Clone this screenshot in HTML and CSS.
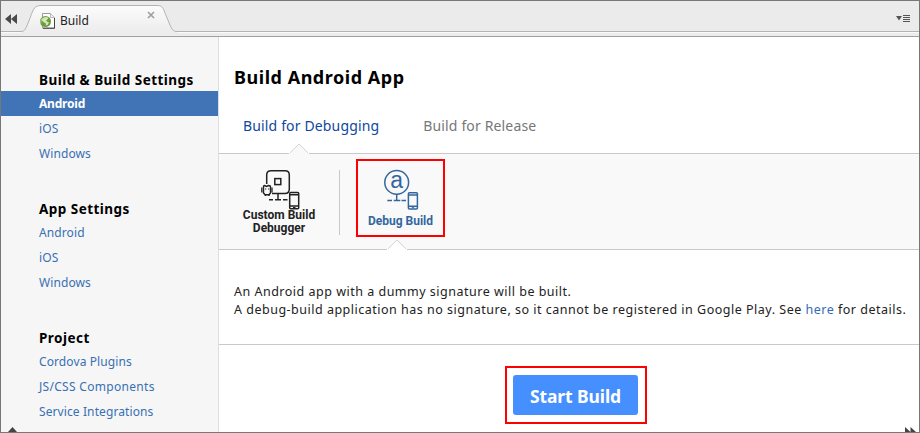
FILE: index.html
```html
<!DOCTYPE html>
<html lang="en">
<head>
<meta charset="utf-8">
<title>Build</title>
<link rel="stylesheet" href="styles.css">
</head>
<body>
<div class="window">
  <header class="tabbar">
    <svg class="tab-shape" width="160" height="33" viewBox="0 0 160 33">
      <defs><linearGradient id="tabfill" x1="0" y1="0" x2="0" y2="1"><stop offset="0" stop-color="#fcfcfc"/><stop offset="1" stop-color="#ececec"/></linearGradient></defs>
      <path d="M0 32V30.500C4 30.500 5 27 7.500 21C12 10 12 4.500 20 4.500H136C141 4.500 142 6.500 144 12L149 24C151 28.500 152 30.500 156 30.500V32Z" fill="url(#tabfill)"/>
      <path d="M0 30.500C4 30.500 5 27 7.500 21C12 10 12 4.500 20 4.500H136C141 4.500 142 6.500 144 12L149 24C151 28.500 152 30.500 156 30.500" fill="none" stroke="#b3b3b3"/>
    </svg>
    <svg class="collapse" width="12" height="10" viewBox="0 0 12 10"><path d="M6 0V10L0 5ZM12 0V10L6 5Z" fill="#4a4a4a"/></svg>
    <div class="tab">
      <svg width="18" height="18" viewBox="0 0 18 18">
        <path d="M3.500 1.500H11.500L15.500 5.500V16H3.500Z" fill="#fff" stroke="#999"/>
        <path d="M11.500 1.500V5.500H15.500" fill="#eee" stroke="#bbb"/>
        <path d="M4 16.300H15.500V6" fill="none" stroke="#444"/>
        <circle cx="6.500" cy="9.500" r="5.500" fill="#6b9c3c"/>
        <path d="M2.500 8A4.500 4.500 0 0 1 9.500 6L7 9L10 10.500A4 4 0 0 1 6.500 13.500Q8 11 5 10.500Z" fill="#d5e8bd"/>
        <path d="M2 12Q1 8 4 6" fill="none" stroke="#a9ca80" stroke-width="1.200"/>
      </svg>
      <span class="tab-title">Build</span>
      <svg class="close" width="8" height="8" viewBox="0 0 8 8"><path d="M1 1L7 7M7 1L1 7" stroke="#a0a0a0" stroke-width="1.700"/></svg>
    </div>
    <svg class="list" width="15" height="8" viewBox="0 0 15 8"><path d="M0 1H6L3 5.500Z" fill="#555"/><path d="M7 .5H14M7 2.500H14M7 4.500H14M7 6.500H14" stroke="#555"/></svg>
  </header>
  <div class="body">
    <nav class="sidebar">
      <section>
        <h2>Build &amp; Build Settings</h2>
        <a class="active">Android</a><a>iOS</a><a>Windows</a>
      </section>
      <section>
        <h2>App Settings</h2>
        <a>Android</a><a>iOS</a><a>Windows</a>
      </section>
      <section>
        <h2>Project</h2>
        <a>Cordova Plugins</a><a class="wide">JS/CSS Components</a><a>Service Integrations</a>
      </section>
      <svg class="up-arrow" width="9" height="5" viewBox="0 0 9 5"><path d="M4.500 0L9 5H0Z" fill="#444"/></svg>
    </nav>
    <main class="main">
      <h1>Build Android App</h1>
      <div class="modes">
        <span class="mode selected">Build for Debugging</span>
        <span class="mode">Build for Release</span>
      </div>
      <div class="toolbar">
        <svg class="notch notch-top" width="20" height="11" viewBox="0 0 20 11"><path d="M0 11V10L1 9.500L10 .8L19 9.500L20 10V11Z" fill="#f9f9f9"/><path d="M1 9.800L10 .9L19 9.800" fill="none" stroke="#d2d2d2"/></svg>
        <div class="tool custom">
          <svg width="44" height="44" viewBox="0 0 44 44" fill="none" stroke="#222" stroke-width="1.500">
            <path d="M8.700 16V7Q8.700 2.800 13 2.800H27Q31.300 2.800 31.300 7V21Q31.300 25.500 27 25.500H14"/>
            <rect x="16.800" y="10.600" width="6" height="6"/>
            <path d="M20 25.500V31.700M17 31.700H23M11 31.700H15M25 31.700H29.500"/>
            <rect x="31.700" y="24.500" width="9" height="16.300" rx="1"/>
            <path d="M31.700 26.700H40.700M31.700 38H40.700"/><path d="M35 39.500H37.500" stroke-width="1"/>
            <path d="M5.500 25V18.500Q5.500 17.500 6.500 17.500L8.500 18.500L10.500 17.500Q12.500 17.500 12.500 19V25L11 26.800H7Z" stroke-width="1.400" fill="#f9f9f9"/>
            <path d="M3.800 19.500V24.500M14 19.500V24.500M7.500 26V28M11 26V28" stroke-width="1.300"/>
            <path d="M7 21H8.300M10 21H11.300" stroke-width="1"/>
          </svg>
          <span>Custom Build<br>Debugger</span>
        </div>
        <div class="tool debug">
          <svg width="44" height="44" viewBox="0 0 44 44" fill="none" stroke="#33669f" stroke-width="1.500">
            <circle cx="20.700" cy="14.400" r="11.900"/>
            <text x="20.700" y="20.200" class="letter">a</text>
            <path d="M20.700 26.300V32.500M17.700 32.500H24.300M11.300 32.500H16M25.500 32.500H30"/>
            <rect x="32.400" y="24.700" width="9" height="16.300" rx="1"/>
            <path d="M32.400 27H41.400M32.400 38.200H41.400"/><path d="M35.700 39.700H38.200" stroke-width="1"/>
          </svg>
          <span>Debug Build</span>
        </div>
        <svg class="notch notch-bottom" width="20" height="11" viewBox="0 0 20 11"><path d="M0 11V10L1 9.500L10 .8L19 9.500L20 10V11Z" fill="#fff"/><path d="M1 9.800L10 .9L19 9.800" fill="none" stroke="#d2d2d2"/></svg>
      </div>
      <div class="description">
        <p>An Android app with a dummy signature will be built.</p>
        <p>A debug-build application has no signature, so it cannot be registered in Google Play. See <a>here</a> for details.</p>
      </div>
      <div class="action">
        <div class="highlight"><button>Start Build</button></div>
      </div>
      <svg class="more-arrow" width="11" height="5" viewBox="0 0 11 5"><path d="M0 0L5.500 5H0ZM5.500 0L11 5H5.500Z" fill="#444"/></svg>
    </main>
  </div>
</div>
</body>
</html>
```
FILE: styles.css
```css
* { box-sizing: border-box; }
body { margin: 0; font-family: "Noto Sans", sans-serif; font-size: 12px; color: #222; }
h1, h2, p { margin: 0; }
.window { width: 920px; height: 433px; border: 1px solid #777; background: #fff; overflow: hidden; display: flex; flex-direction: column; }
.tabbar { position: relative; height: 36px; flex: none; display: flex; align-items: flex-start; background: linear-gradient(#ebebeb 0 30px, #b3b3b3 30px 31px, #fafafa 31px 32px, #ececec 32px 35px, #a0a0a0 35px); }
.tab-shape { position: absolute; left: 20px; top: 0; }
.collapse { margin: 13px 0 0 4px; }
.tab { position: relative; display: flex; width: 119px; height: 30px; margin-left: 22px; padding-top: 11px; }
.tab-title { margin-left: 3px; line-height: 17px; color: #222; }
.close { position: absolute; left: 108px; top: 10px; }
.list { margin: 14px 8px 0 auto; position: relative; }
.body { flex: 1; display: flex; min-height: 0; }
.sidebar { position: relative; width: 218px; flex: none; border-right: 1px solid #ddd; background: #f6f6f6; overflow: hidden; }
.sidebar section { height: 129px; }
.sidebar h2 { height: 54px; padding: 32px 0 0 38px; font-size: 13.5px; line-height: 22px; letter-spacing: .46px; color: #000; white-space: nowrap; }
.sidebar a { display: block; height: 25px; padding-left: 38px; line-height: 25px; letter-spacing: .1px; color: #3870b3; }
.sidebar .wide { letter-spacing: .3px; }
.sidebar .active { background: #4074b7; color: #fff; font-weight: bold; letter-spacing: -.2px; }
.up-arrow { position: absolute; left: 7px; bottom: 0; }
.main { position: relative; flex: 1; min-width: 0; display: flex; flex-direction: column; }
h1 { height: 76px; padding: 28px 0 0 15px; font-size: 18px; line-height: 24px; letter-spacing: .53px; color: #000; }
.modes { display: flex; gap: 44px; height: 40px; padding: 3px 0 0 24px; }
.mode { font-size: 14px; line-height: 20px; letter-spacing: .15px; color: #777; }
.mode.selected { color: #0d47a1; }
.toolbar { position: relative; height: 97px; flex: none; display: flex; background: #f9f9f9; border-top: 1px solid #c9c9c9; border-bottom: 1px solid #c9c9c9; }
.notch { position: absolute; }
.notch-top { left: 70px; top: -11px; }
.notch-bottom { left: 168px; bottom: -1px; }
.tool { display: flex; flex-direction: column; text-align: center; font: bold 12px/13px Roboto, sans-serif; }
.custom { width: 121px; height: 65px; margin-top: 16px; border-right: 1px solid #c9c9c9; color: #222; }
.custom svg { margin: -2px 0 -3px 39px; flex: none; }
.custom span { width: 120px; }
.debug { width: 89px; height: 78px; margin: 5px 0 0 16px; border: 2px solid #f00; color: #33669f; padding-top: 7px; }
.debug svg { margin: 0 0 1px 18px; flex: none; }
.debug span { line-height: 17px; }
.letter { font: 23px "Liberation Sans", sans-serif; text-anchor: middle; fill: #33669f; stroke: none; }
.description { height: 95px; flex: none; padding: 33px 0 0 15px; border-bottom: 1px solid #c9c9c9; font-size: 12.5px; line-height: 18px; letter-spacing: .5px; white-space: nowrap; }
.description a { color: #3868b5; }
.action { display: flex; justify-content: center; padding: 21px 0 0 14px; }
.highlight { width: 142px; height: 58px; border: 2px solid #f00; padding: 7px 0 0 6px; }
button { display: block; width: 125px; height: 40px; border: 0; border-radius: 3px; padding: 1px 0 0; background: #468fff; color: #fff; font: bold 17.5px/40px "Noto Sans", sans-serif; letter-spacing: -.1px; }
.more-arrow { position: absolute; right: 3px; bottom: 0; }
```
